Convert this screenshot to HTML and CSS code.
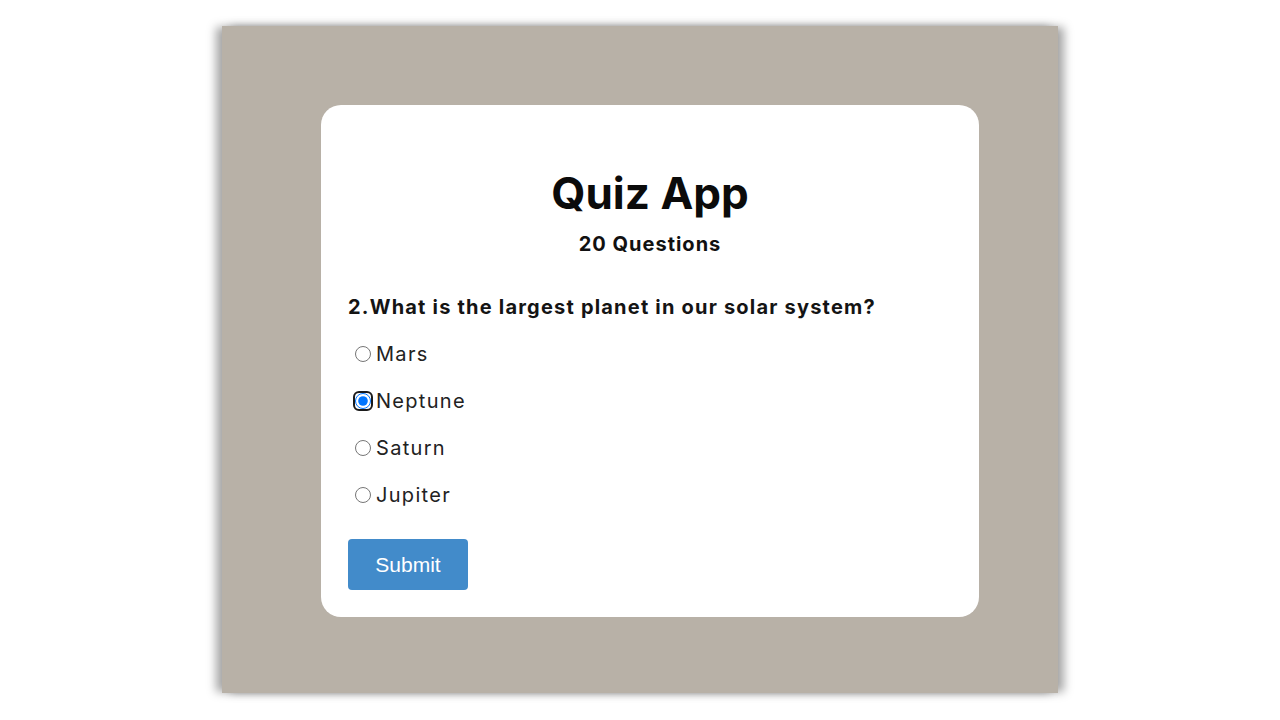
FILE: index.html
```html
<!DOCTYPE html>
<html lang="en">
<head>
<meta charset="utf-8">
<title>Quiz App</title>
<link rel="stylesheet" href="styles.css">
</head>
<body>
<div class="panel">
  <div class="card">
    <h1 class="title">Quiz App</h1>
    <h3 class="subtitle">20 Questions</h3>
    <p class="question">2.What is the largest planet in our solar system?</p>
    <div class="options">
      <label class="option"><span class="ring"><input type="radio" name="q"></span>Mars</label>
      <label class="option"><span class="ring focused"><input type="radio" name="q" checked></span>Neptune</label>
      <label class="option"><span class="ring"><input type="radio" name="q"></span>Saturn</label>
      <label class="option"><span class="ring"><input type="radio" name="q"></span>Jupiter</label>
    </div>
    <button class="submit" type="button">Submit</button>
  </div>
</div>
</body>
</html>
```
FILE: styles.css
```css
html, body {
  margin: 0;
  padding: 0;
  background: #ffffff;
}
body {
  height: 720px;
  display: flex;
  justify-content: center;
  align-items: flex-start;
  font-family: "Inter", "Open Sans", sans-serif;
  color: #111;
}
.panel {
  margin-top: 26px;
  width: 836px;
  height: 667px;
  box-sizing: border-box;
  background: #b8b1a7;
  box-shadow: -7px 0 9px -1px rgba(0, 0, 0, 0.35), 7px 0 9px -1px rgba(0, 0, 0, 0.35);
  padding: 79px 79px 0 99px;
}
.card {
  width: 658px;
  height: 512px;
  box-sizing: border-box;
  background: #fff;
  border-radius: 20px;
  padding: 62px 27px 27px 27px;
  display: flex;
  flex-direction: column;
  align-items: flex-start;
}
.title {
  align-self: stretch;
  text-align: center;
  margin: 0;
  font-size: 44px;
  line-height: 52px;
  font-weight: 700;
  color: #0b0b0b;
}
.subtitle {
  align-self: stretch;
  text-align: center;
  margin: 13px 0 0 0;
  font-size: 20px;
  line-height: 24px;
  font-weight: 700;
  letter-spacing: 1px;
}
.question {
  margin: 39px 0 0 0;
  font-size: 20px;
  line-height: 24px;
  font-weight: 700;
  letter-spacing: 1.2px;
  color: #141414;
}
.options {
  margin-top: 11px;
  display: flex;
  flex-direction: column;
}
.option {
  height: 47px;
  display: flex;
  align-items: center;
  font-size: 20px;
  font-weight: 400;
  letter-spacing: 1.3px;
  color: #222;
}
.ring {
  display: inline-flex;
  align-items: center;
  justify-content: center;
  width: 20px;
  height: 20px;
  margin: 0 3px 0 5px;
  border: 2px solid transparent;
  border-radius: 6px;
  box-sizing: border-box;
}
.ring.focused {
  border-color: #1b1b1b;
  box-shadow: inset 0 0 0 1px #fff;
}
.ring input {
  margin: 0;
  width: 16px;
  height: 16px;
}
.submit {
  margin-top: 21px;
  width: 120px;
  height: 51px;
  background: #428bca;
  color: #fff;
  border: none;
  border-radius: 4px;
  font-family: "Liberation Sans", Arial, sans-serif;
  font-size: 21px;
}
```
